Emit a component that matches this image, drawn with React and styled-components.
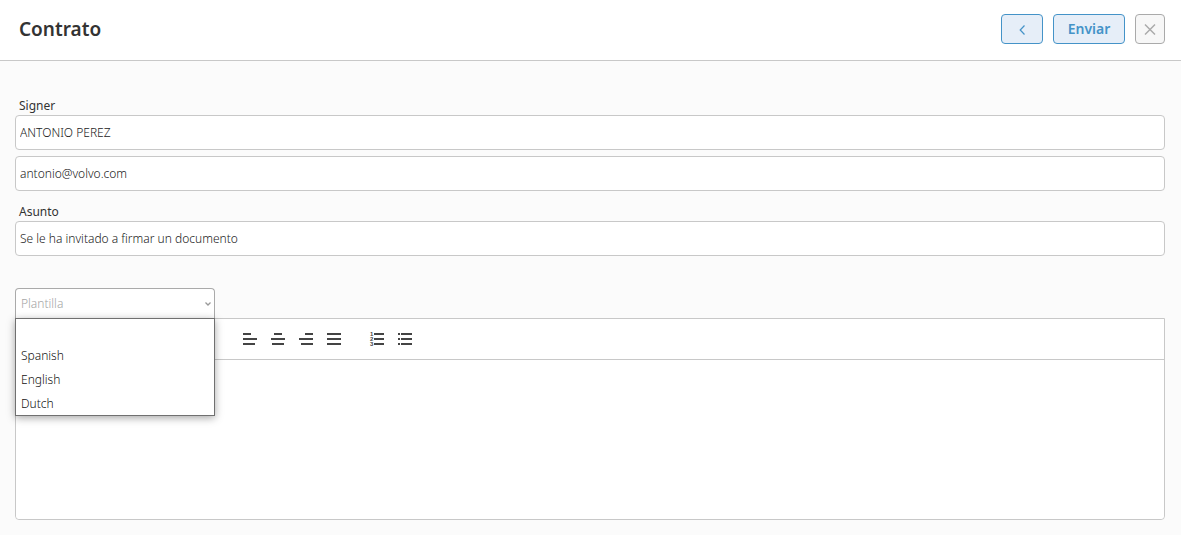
import React, { useState } from 'react';
import styled, { createGlobalStyle } from 'styled-components';

const GlobalStyle = createGlobalStyle`
    * {
        box-sizing: border-box;
    }
    body {
        margin: 0;
        background: #fbfbfb;
        color: #333;
        font-family: "Noto Sans", "Open Sans", sans-serif;
        font-size: 12px;
        font-weight: 300;
    }
    button, input, select, textarea {
        font: inherit;
        color: inherit;
    }
`;

const Header = styled.header`
    display: flex;
    align-items: center;
    justify-content: space-between;
    padding: 14px 16px 16px 19px;
    background: #fff;
    border-bottom: 1px solid #c8c8c8;
`;

const Title = styled.h1`
    margin: 0;
    font-size: 19px;
    line-height: 30px;
    font-weight: 600;
`;

const Actions = styled.div`
    display: flex;
    gap: 10px;
`;

const ActionButton = styled.button`
    display: flex;
    align-items: center;
    justify-content: center;
    width: ${props => props.$width};
    height: 30px;
    padding: 0 0 1px;
    border: 1px solid ${props => (props.$muted ? '#aaa' : '#4493c8')};
    border-radius: 4px;
    background: ${props => (props.$muted ? '#f7f7f7' : '#e6eef8')};
    color: ${props => (props.$muted ? '#aaa' : '#4493c8')};
    font-size: 14px;
    font-weight: 600;
`;

const Form = styled.form`
    padding: 36px 16px 15px 15px;
`;

const Label = styled.label`
    display: block;
    padding-left: 4px;
    line-height: 18px;
    font-weight: 400;
`;

const Input = styled.input`
    display: block;
    width: 100%;
    height: 35px;
    margin-bottom: ${props => (props.$last ? '12px' : '6px')};
    padding: 0 4px;
    border: 1px solid #c8c8c8;
    border-radius: 4px;
    background: #fff;
    color: #222;
    outline: none;
`;

const TemplatePicker = styled.div`
    position: relative;
    width: 200px;
    margin-top: 32px;
`;

const Select = styled.select`
    display: block;
    appearance: none;
    width: 100%;
    height: 30px;
    padding: 0 5px;
    border: 1px solid #aaa;
    border-bottom: 0;
    border-radius: 4px 4px 0 0;
    background: #fff;
    color: #a4a4a4;
    outline: none;
`;

const Chevron = styled.svg`
    position: absolute;
    right: 3px;
    top: 12px;
    pointer-events: none;
`;

const Menu = styled.ul`
    position: absolute;
    z-index: 1;
    top: 100%;
    left: 0;
    width: 100%;
    margin: 0;
    padding: 0;
    list-style: none;
    border: 1px solid #707070;
    background: #fff;
    color: #111;
    box-shadow: 0 2px 8px rgba(0, 0, 0, 0.35);
`;

const MenuItem = styled.li`
    height: 24px;
    padding: 1px 5px 0;
    line-height: 24px;
    cursor: default;
`;

const Editor = styled.section`
    border: 1px solid #c8c8c8;
    border-radius: 0 0 4px 4px;
    background: #fff;
`;

const Toolbar = styled.div`
    display: flex;
    gap: 15px;
    padding: 8px 8px 8px 220px;
    border-bottom: 1px solid #c8c8c8;
`;

const ToolGroup = styled.div`
    display: flex;
`;

const ToolButton = styled.button`
    display: flex;
    width: 28px;
    height: 24px;
    padding: 3px 5px;
    border: 0;
    background: none;
    color: #444;
`;

const Body = styled.textarea`
    display: block;
    width: 100%;
    height: 159px;
    padding: 12px 15px;
    border: 0;
    border-radius: 4px;
    background: #fff;
    resize: none;
    outline: none;
`;

const NumberMark = styled.text`
    font-family: "Liberation Sans", sans-serif;
    font-size: 6px;
    font-weight: 700;
    fill: currentColor;
`;

const TEMPLATES = ['', 'Spanish', 'English', 'Dutch'];

const ALIGNMENTS = [
    { name: 'Align left', path: 'M2 4h8M2 9h14M2 14h12' },
    { name: 'Align center', path: 'M5 4h8M2 9h14M3 14h12' },
    { name: 'Align right', path: 'M8 4h8M2 9h14M4 14h12' },
    { name: 'Justify', path: 'M2 4h14M2 9h14M2 14h14' },
];

const ToolIcon = ({path, children}) => (
    <svg width="18" height="18" viewBox="0 0 18 18">
        <path d={path} stroke="currentColor" strokeWidth="2" fill="none" />
        {children}
    </svg>
);

export default () => {
    const [template, setTemplate] = useState('');
    const [open, setOpen] = useState(true);

    const pick = value => {
        setTemplate(value);
        setOpen(false);
    };

    return (
        <>
            <GlobalStyle />
            <Header>
                <Title>Contrato</Title>
                <Actions>
                    <ActionButton type="button" $width="42px" aria-label="Volver">
                        <svg width="8" height="12" viewBox="0 0 8 12">
                            <path d="M6.5 2.5L2.2 7l4.3 4.5" stroke="currentColor" strokeWidth="1.2" fill="none" />
                        </svg>
                    </ActionButton>
                    <ActionButton type="submit" form="contract" $width="72px">Enviar</ActionButton>
                    <ActionButton type="button" $width="30px" $muted aria-label="Cerrar">
                        <svg width="12" height="12" viewBox="0 0 12 12">
                            <path d="M1 1.5l10 10M11 1.5l-10 10" stroke="currentColor" strokeWidth="1.5" />
                        </svg>
                    </ActionButton>
                </Actions>
            </Header>
            <Form id="contract" onSubmit={e => e.preventDefault()}>
                <Label htmlFor="signer">Signer</Label>
                <Input id="signer" defaultValue="ANTONIO PEREZ" />
                <Input type="email" aria-label="Email" defaultValue="antonio@volvo.com" $last />
                <Label htmlFor="subject">Asunto</Label>
                <Input id="subject" defaultValue="Se le ha invitado a firmar un documento" $last />
                <TemplatePicker>
                    <Select
                        aria-label="Plantilla"
                        value={template}
                        onMouseDown={e => {
                            e.preventDefault();
                            setOpen(!open);
                        }}
                        onChange={e => pick(e.target.value)}
                    >
                        {TEMPLATES.map(name => (
                            <option key={name} value={name}>{name || 'Plantilla'}</option>
                        ))}
                    </Select>
                    <Chevron width="8" height="8" viewBox="0 0 8 8">
                        <path d="M1.5 2.5L4 5l2.5-2.5" stroke="#999" strokeWidth="1.3" fill="none" />
                    </Chevron>
                    {open &&
                        <Menu role="listbox" aria-label="Plantilla">
                            {TEMPLATES.map(name => (
                                <MenuItem
                                    key={name}
                                    role="option"
                                    aria-selected={name === template}
                                    onClick={() => pick(name)}
                                >
                                    {name}
                                </MenuItem>
                            ))}
                        </Menu>
                    }
                </TemplatePicker>
                <Editor>
                    <Toolbar>
                        <ToolGroup>
                            {ALIGNMENTS.map(({name, path}) => (
                                <ToolButton key={name} type="button" aria-label={name}>
                                    <ToolIcon path={path} />
                                </ToolButton>
                            ))}
                        </ToolGroup>
                        <ToolGroup>
                            <ToolButton type="button" aria-label="Ordered list">
                                <ToolIcon path="M6 4h10M6 9h10M6 14h10">
                                    <NumberMark x="2" y="6">1</NumberMark>
                                    <NumberMark x="2" y="11">2</NumberMark>
                                    <NumberMark x="2" y="16">3</NumberMark>
                                </ToolIcon>
                            </ToolButton>
                            <ToolButton type="button" aria-label="Bullet list">
                                <ToolIcon path="M2 4h2M5 4h11M2 9h2M5 9h11M2 14h2M5 14h11" />
                            </ToolButton>
                        </ToolGroup>
                    </Toolbar>
                    <Body aria-label="Mensaje" />
                </Editor>
            </Form>
        </>
    );
};
